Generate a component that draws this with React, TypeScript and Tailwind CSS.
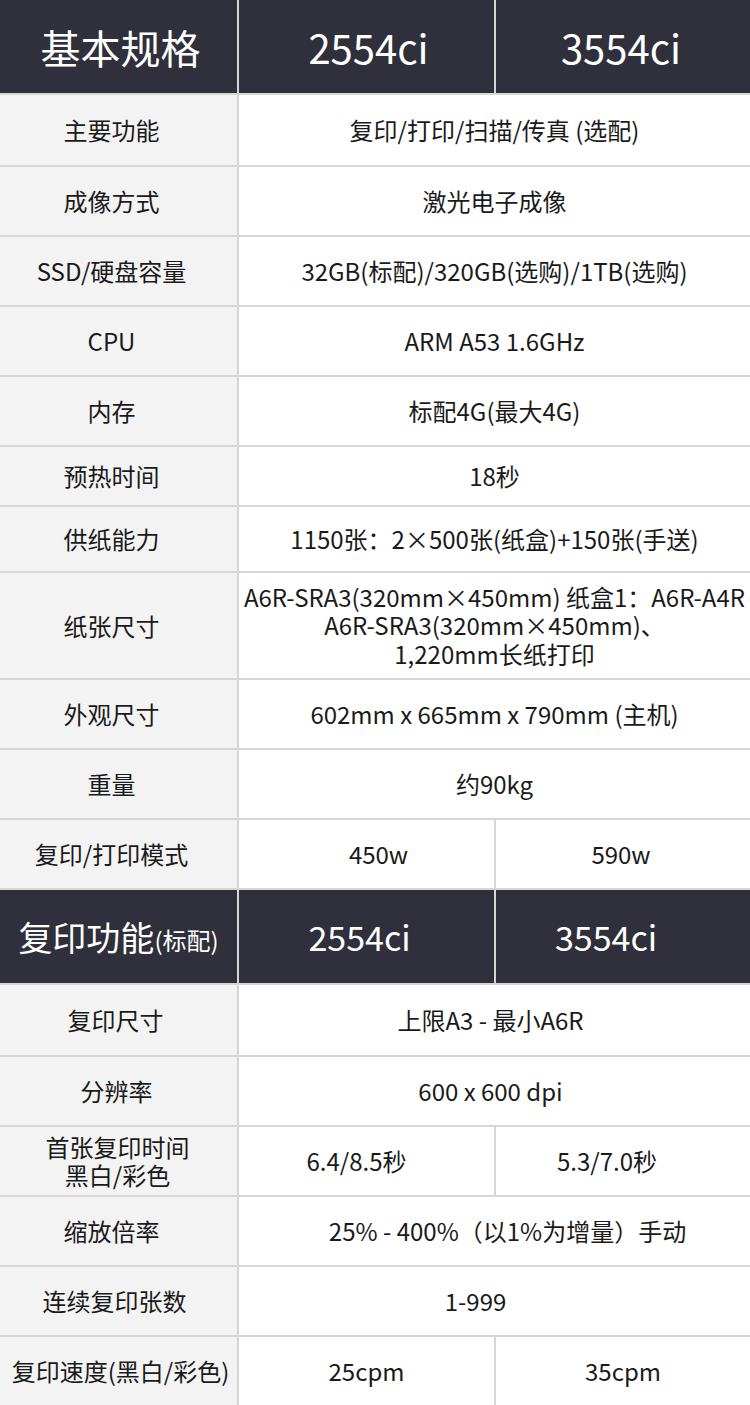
import React from "react";

type Cell = { text: React.ReactNode; cls?: string };

type Row = {
  label: React.ReactNode;
  h: string;
  lcls?: string;
  values: Cell[];
};

const font = { fontFamily: '"Noto Sans CJK SC", "Noto Sans", sans-serif' };

const basic: Row[] = [
  { label: "主要功能", h: "h-[70px]", values: [{ text: "复印/打印/扫描/传真 (选配)" }] },
  { label: "成像方式", h: "h-[68px]", values: [{ text: "激光电子成像" }] },
  { label: "SSD/硬盘容量", h: "h-[68px]", values: [{ text: "32GB(标配)/320GB(选购)/1TB(选购)" }] },
  { label: "CPU", h: "h-[68px]", values: [{ text: "ARM A53 1.6GHz" }] },
  { label: "内存", h: "h-[68px]", values: [{ text: "标配4G(最大4G)" }] },
  { label: "预热时间", h: "h-[58px]", values: [{ text: "18秒" }] },
  { label: "供纸能力", h: "h-[64px]", values: [{ text: "1150张：2×500张(纸盒)+150张(手送)" }] },
  {
    label: "纸张尺寸",
    h: "h-[105px]",
    values: [
      {
        text: (
          <>
            A6R-SRA3(320mm×450mm) 纸盒1：A6R-A4R
            <br />
            A6R-SRA3(320mm×450mm)、
            <br />
            1,220mm长纸打印
          </>
        ),
      },
    ],
  },
  { label: "外观尺寸", h: "h-[68px]", values: [{ text: "602mm x 665mm x 790mm (主机)" }] },
  { label: "重量", h: "h-[68px]", values: [{ text: "约90kg" }] },
  {
    label: "复印/打印模式",
    h: "h-[68px]",
    values: [{ text: "450w", cls: "pl-[24px]" }, { text: "590w", cls: "pr-[4px]" }],
  },
];

const copy: Row[] = [
  { label: "复印尺寸", h: "h-[70px]", lcls: "pr-[6px]", values: [{ text: "上限A3 - 最小A6R", cls: "pr-[8px]" }] },
  { label: "分辨率", h: "h-[68px]", lcls: "pr-[4px]", values: [{ text: "600 x 600 dpi", cls: "pr-[8px]" }] },
  {
    label: (
      <>
        首张复印时间
        <br />
        黑白/彩色
      </>
    ),
    h: "h-[68px]",
    lcls: "pr-[2px]",
    values: [
      { text: "6.4/8.5秒", cls: "pr-[20px]" },
      { text: "5.3/7.0秒", cls: "pr-[32px]" },
    ],
  },
  { label: "缩放倍率", h: "h-[68px]", values: [{ text: "25% - 400%（以1%为增量）手动", cls: "pl-[26px]" }] },
  { label: "连续复印张数", h: "h-[68px]", lcls: "pr-[8px]", values: [{ text: "1-999", cls: "pr-[38px]" }] },
  {
    label: "复印速度(黑白/彩色)",
    h: "h-[68px]",
    lcls: "pl-[4px]",
    values: [{ text: "25cpm" }, { text: "35cpm" }],
  },
];

function SpecRow({ row }: { row: Row }) {
  return (
    <>
      <div
        className={`${row.h} ${row.lcls ?? "pr-[14px]"} bg-[#f3f3f3] flex items-center justify-center text-center leading-[28px] whitespace-nowrap`}
      >
        <div>{row.label}</div>
      </div>
      {row.values.length === 1 ? (
        <div
          className={`${row.h} ${row.values[0].cls ?? ""} col-span-2 bg-white flex items-center justify-center text-center leading-[28.5px] whitespace-nowrap`}
        >
          <div>{row.values[0].text}</div>
        </div>
      ) : (
        row.values.map((v, i) => (
          <div
            key={i}
            className={`${row.h} ${v.cls ?? ""} bg-white flex items-center justify-center text-center`}
          >
            {v.text}
          </div>
        ))
      )}
    </>
  );
}

export default function App() {
  return (
    <div
      className="w-[750px] h-[1405px] overflow-hidden bg-[#d6d6d6] grid grid-cols-[237px_255px_254px] gap-[2px] text-[24px] text-[#1a1a1a]"
      style={font}
    >
      <div className="h-[93px] bg-[#2f303b] text-white text-[40px] flex items-center justify-center pl-[4px]">
        基本规格
      </div>
      <div className="h-[93px] bg-[#2f303b] text-white text-[40px] flex items-center justify-center pl-[4px]">
        2554ci
      </div>
      <div className="h-[93px] bg-[#2f303b] text-white text-[40px] flex items-center justify-center pr-[4px]">
        3554ci
      </div>
      {basic.map((r, i) => (
        <SpecRow key={i} row={r} />
      ))}
      <div className="h-[93px] bg-[#2f303b] text-white flex items-center justify-center whitespace-nowrap">
        <span className="text-[34px]">复印功能</span>
        <span className="text-[24px] pt-[6px]">(标配)</span>
      </div>
      <div className="h-[93px] bg-[#2f303b] text-white text-[34px] flex items-center justify-center pr-[14px]">
        2554ci
      </div>
      <div className="h-[93px] bg-[#2f303b] text-white text-[34px] flex items-center justify-center pr-[34px]">
        3554ci
      </div>
      {copy.map((r, i) => (
        <SpecRow key={i} row={r} />
      ))}
    </div>
  );
}
